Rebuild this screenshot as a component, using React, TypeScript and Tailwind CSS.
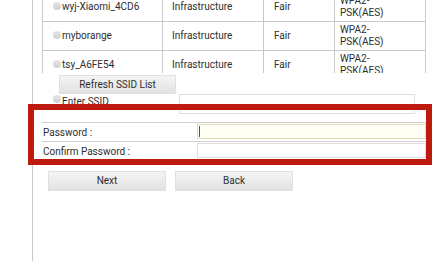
import React from "react";

const rows = ["wyj-Xiaomi_4CD6", "myborange", "tsy_A6FE54"];

function Radio({ className = "" }: { className?: string }) {
  return (
    <span
      className={
        "inline-block w-[8px] h-[8px] rounded-full bg-gradient-to-b from-[#e6e6e6] to-[#cfcfcf] shrink-0 " + className
      }
    />
  );
}

export default function App() {
  return (
    <div
      className="relative w-[436px] h-[261px] overflow-hidden bg-white text-[#2e2e2e] flex"
      style={{ fontFamily: "Roboto, 'Liberation Sans', sans-serif" }}
    >
      <div className="w-[32px] shrink-0" />
      <div className="flex-1 border-l border-[#c8c8c8] pl-[9px] flex flex-col text-[10px] leading-[12px]">
        {/* SSID table (scrolled) */}
        <div className="h-[73px] overflow-hidden w-[384px]">
          <div className="-mt-[8px] border-t border-[#c8c8c8]">
            {rows.map((name) => (
              <div key={name} className="flex h-[29px] border-b border-[#c8c8c8]">
                <div className="w-[120px] border-l border-[#c8c8c8] pl-[10px] flex items-center gap-[1px]">
                  <Radio className="mb-[2px]" />
                  <span>{name}</span>
                </div>
                <div className="w-[101px] border-l border-[#c8c8c8] pl-[9px] flex items-center">Infrastructure</div>
                <div className="w-[71px] border-l border-[#c8c8c8] pl-[10px] flex items-center">Fair</div>
                <div className="w-[92px] border-l border-r border-[#c8c8c8] pl-[5px] flex flex-col justify-center">
                  <span>WPA2-</span>
                  <span>PSK(AES)</span>
                </div>
              </div>
            ))}
          </div>
        </div>

        {/* Refresh button */}
        <button className="mt-[2px] ml-[17px] w-[117px] h-[19px] bg-gradient-to-b from-[#f4f4f4] to-[#e2e2e2] border border-[#e0e0e0] text-[10px] text-[#2e2e2e] flex items-center justify-center">
          Refresh SSID List
        </button>

        {/* Enter SSID */}
        <div className="flex items-start h-[20px] w-[384px]">
          <div className="w-[137px] h-[13px] pl-[11px] flex items-center gap-[1px] mt-[1px]">
            <Radio className="mb-[5px]" />
            <span>Enter SSID</span>
          </div>
          <div className="w-[236px] h-[20px] border border-[#dedede] bg-white" />
        </div>

        {/* Password section */}
        <div className="mt-[8px] w-[384px]">
          <div className="flex h-[19px] border-t border-[#d0d0d0] pt-[1px] items-start">
            <span className="w-[155px] pl-[1px] self-center">Password :</span>
            <div className="w-[229px] h-[15px] border border-[#e4dfb4] bg-[#fefef4] flex items-center pl-[1px]">
              <span className="w-[1px] h-[11px] bg-[#555]" />
            </div>
          </div>
          <div className="flex h-[20px] border-t border-[#d0d0d0] pt-[1px] items-start">
            <span className="w-[155px] pl-[1px] self-center">Confirm Password :</span>
            <div className="w-[229px] h-[15px] border border-[#dedede] bg-white" />
          </div>
        </div>

        {/* Next / Back */}
        <div className="mt-[10px] ml-[6px] flex gap-[9px]">
          <button className="w-[118px] h-[20px] bg-gradient-to-b from-[#f4f4f4] to-[#e2e2e2] border border-[#e0e0e0] text-[10px] text-[#2e2e2e]">
            Next
          </button>
          <button className="w-[118px] h-[20px] bg-gradient-to-b from-[#f4f4f4] to-[#e2e2e2] border border-[#e0e0e0] text-[10px] text-[#2e2e2e]">
            Back
          </button>
        </div>
      </div>

      {/* Red highlight annotation */}
      <div className="absolute left-[28px] top-[104px] w-[404px] h-[61px] border-[6px] border-[#bf1a10] pointer-events-none" />
    </div>
  );
}
